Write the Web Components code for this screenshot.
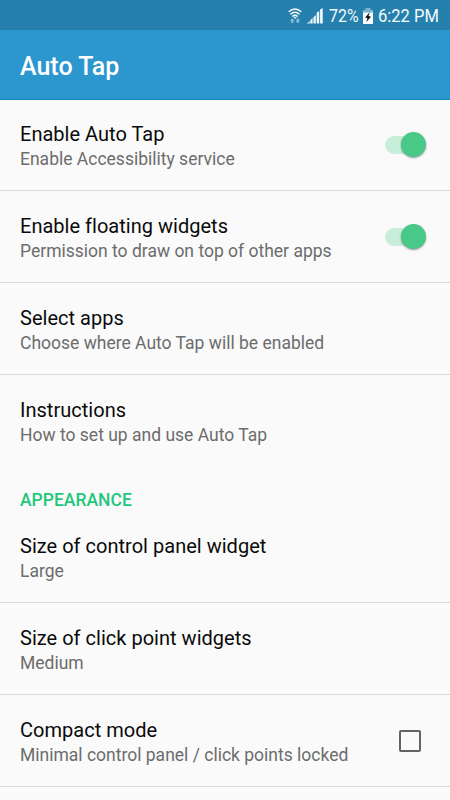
<!DOCTYPE html>
<html lang="en">
<head>
<meta charset="utf-8">
<title>Auto Tap</title>
<style>
  body {
    margin: 0;
    height: 800px;
    overflow: hidden;
    background: #fafafa;
    font-family: Roboto, "Liberation Sans", sans-serif;
  }
</style>
</head>
<body>
<settings-screen></settings-screen>

<script>
class StatusBar extends HTMLElement {
  constructor() {
    super();
    this.shadowDOM = this.attachShadow({ mode: "open" });
  }

  connectedCallback() {
    this.shadowDOM.innerHTML = `
      <style>
      :host {
        display: flex;
        justify-content: flex-end;
        align-items: center;
        box-sizing: border-box;
        height: 30px;
        padding: 2px 11px 0 0;
        background: #2680ae;
        color: #f4fafd;
        font-size: 19px;
        line-height: 28px;
        white-space: nowrap;
      }
      svg { display: block; flex: none; }
      .wifi { margin-right: 5px; }
      .signal { margin-right: 6px; }
      .battery { margin: 0 5px 0 4px; }
      .text { display: block; height: 28px; }
      .text span { display: inline-block; transform-origin: 0 50%; }
      .percent { width: 30px; }
      .percent span { transform: scaleX(.84); }
      .clock { width: 61px; }
      .clock span { transform: scaleX(.87); }
      </style>
      <svg class="wifi" width="14" height="18" viewBox="0 0 14 18" fill="none" stroke="#f4fafd" stroke-width="1.5">
        <path d="M.7 4.7Q7-.8 13.3 4.7M2.5 7.2Q7 3.2 11.5 7.2M4.3 9.5Q7 7.2 9.7 9.5"/>
        <path d="M5.4 10.3h3.2L7 12z" fill="#f4fafd" stroke="none"/>
        <path d="M2 14l2.2-2.800L6.400 14H5.200v2H3.200v-2zM7.600 13.400h1.200v-2h2v2H12L9.800 16.200z" fill="#8fc0d9" stroke="none"/>
      </svg>
      <svg class="signal" width="16" height="16" viewBox="0 0 16 16" fill="#f4fafd">
        <path d="M0 15.500L2.600 13v2.500zM3.300 12.300l2.300-2.300v5.500H3.300zM6.500 9.200L8.800 7v8.500H6.500zM9.700 4.800L12.200 3v12.500H9.700zM13.100 1.500L15.700 0v15.500h-2.600z"/>
      </svg>
      <div class="text percent"><span>72%</span></div>
      <svg class="battery" width="10" height="16" viewBox="0 0 10 16">
        <path d="M2.500 0h5v2H10v3H0V2h2.500z" fill="#79b3d0"/>
        <path d="M0 4.500h10V16H0z" fill="#f8fcfe"/>
        <path d="M6.800 4L2.200 9.400l2.300.8L3.300 14l4.700-5.200-2.500-.7z" fill="#111"/>
      </svg>
      <div class="text clock"><span>6:22 PM</span></div>
    `;
  }
}

class AppBar extends HTMLElement {
  constructor() {
    super();
    this.shadowDOM = this.attachShadow({ mode: "open" });
  }

  connectedCallback() {
    this.shadowDOM.innerHTML = `
      <style>
      :host {
        display: flex;
        align-items: center;
        box-sizing: border-box;
        height: 70px;
        padding: 3px 20px 0;
        background: #2c97cf;
        border-bottom: 1px solid #1b83bb;
        color: #fff;
        font-size: 25px;
        font-weight: 500;
      }
      </style>
      <slot></slot>
    `;
  }
}

class ToggleSwitch extends HTMLElement {
  constructor() {
    super();
    this.shadowDOM = this.attachShadow({ mode: "open" });
  }

  connectedCallback() {
    this.shadowDOM.innerHTML = `
      <style>
      :host {
        display: flex;
        justify-content: flex-end;
        align-items: center;
        box-sizing: border-box;
        width: 41px;
        height: 18px;
        border-radius: 9px;
        background: linear-gradient(90deg, #c8eeda 34px, transparent 34px);
      }
      .thumb {
        width: 25px;
        height: 25px;
        flex: none;
        border-radius: 50%;
        background: #48c988;
        box-shadow: 0 1px 2px rgba(0, 0, 0, .4);
      }
      </style>
      <div class="thumb"></div>
    `;
  }
}

class CheckBox extends HTMLElement {
  constructor() {
    super();
    this.shadowDOM = this.attachShadow({ mode: "open" });
  }

  connectedCallback() {
    this.shadowDOM.innerHTML = `
      <style>
      :host {
        display: block;
        box-sizing: border-box;
        width: 22px;
        height: 22px;
        margin-right: 5px;
        border: 2px solid #636363;
        border-radius: 2px;
      }
      </style>
    `;
  }
}

class PreferenceRow extends HTMLElement {
  constructor() {
    super();
    this.shadowDOM = this.attachShadow({ mode: "open" });
  }

  connectedCallback() {
    this.shadowDOM.innerHTML = `
      <style>
      :host {
        display: flex;
        justify-content: space-between;
        align-items: center;
        box-sizing: border-box;
        height: 92px;
        padding: 0 24px 0 20px;
        border-bottom: 1px solid #d9d9d9;
        white-space: nowrap;
      }
      :host([last]) { border-bottom-color: transparent; }
      .text { padding-top: 2px; }
      .title {
        color: #0a0a0a;
        font-size: 20px;
        line-height: 24px;
        letter-spacing: .02px;
      }
      .summary {
        margin-top: 2px;
        color: #6c6c6c;
        font-size: 17.5px;
        line-height: 22px;
      }
      </style>
      <div class="text">
        <div class="title">${this.getAttribute("title-text")}</div>
        <div class="summary">${this.getAttribute("summary")}</div>
      </div>
      <slot></slot>
    `;
  }
}

class SectionHeader extends HTMLElement {
  constructor() {
    super();
    this.shadowDOM = this.attachShadow({ mode: "open" });
  }

  connectedCallback() {
    this.shadowDOM.innerHTML = `
      <style>
      :host {
        display: block;
        box-sizing: border-box;
        height: 44px;
        padding: 22px 20px 0;
        color: #1fc77c;
        font-size: 17.5px;
        font-weight: 500;
        line-height: 22px;
      }
      </style>
      <slot></slot>
    `;
  }
}

class SettingsScreen extends HTMLElement {
  constructor() {
    super();
    this.shadowDOM = this.attachShadow({ mode: "open" });
  }

  connectedCallback() {
    this.shadowDOM.innerHTML = `
      <style>
      :host {
        display: block;
        height: 800px;
        overflow: hidden;
      }
      main { margin-top: -1px; }
      </style>
      <status-bar></status-bar>
      <app-bar>Auto Tap</app-bar>
      <main>
        <preference-row title-text="Enable Auto Tap" summary="Enable Accessibility service">
          <toggle-switch></toggle-switch>
        </preference-row>
        <preference-row title-text="Enable floating widgets" summary="Permission to draw on top of other apps">
          <toggle-switch></toggle-switch>
        </preference-row>
        <preference-row title-text="Select apps" summary="Choose where Auto Tap will be enabled"></preference-row>
        <preference-row title-text="Instructions" summary="How to set up and use Auto Tap" last></preference-row>
        <section-header>APPEARANCE</section-header>
        <preference-row title-text="Size of control panel widget" summary="Large"></preference-row>
        <preference-row title-text="Size of click point widgets" summary="Medium"></preference-row>
        <preference-row title-text="Compact mode" summary="Minimal control panel / click points locked">
          <check-box></check-box>
        </preference-row>
      </main>
    `;
  }
}

customElements.define("status-bar", StatusBar);
customElements.define("app-bar", AppBar);
customElements.define("toggle-switch", ToggleSwitch);
customElements.define("check-box", CheckBox);
customElements.define("preference-row", PreferenceRow);
customElements.define("section-header", SectionHeader);
customElements.define("settings-screen", SettingsScreen);
</script>
</body>
</html>
